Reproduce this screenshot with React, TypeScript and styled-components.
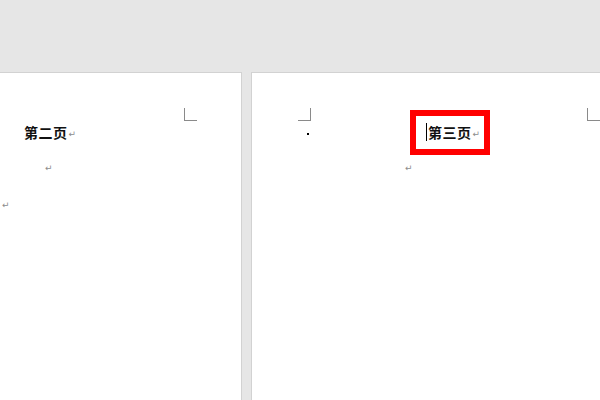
import React from "react";
import styled, { createGlobalStyle } from "styled-components";

const GlobalStyle = createGlobalStyle`
  html, body {
    margin: 0;
    padding: 0;
    background: #e6e6e6;
    overflow: hidden;
  }
`;

const Workspace = styled.div`
  width: 600px;
  height: 400px;
  padding-top: 72px;
  box-sizing: border-box;
  display: flex;
  gap: 9px;
  background: #e6e6e6;
  font-family: "Noto Sans CJK SC", "Noto Sans", sans-serif;
`;

const Page = styled.div<{ $width?: number }>`
  position: relative;
  flex: ${(p) => (p.$width ? `0 0 ${p.$width}px` : "1")};
  height: 328px;
  background: #ffffff;
  border-top: 1px solid #d2d2d2;
  border-left: ${(p) => (p.$width ? "none" : "1px solid #d2d2d2")};
  border-right: ${(p) => (p.$width ? "1px solid #d2d2d2" : "none")};
  box-sizing: border-box;
  padding-top: 40px;
`;

/* margin corner marks drawn on the page canvas */
const CornerMark = styled.div<{ $x: number; $flip?: boolean }>`
  position: absolute;
  top: 35px;
  left: ${(p) => p.$x}px;
  width: 12px;
  height: 12px;
  border-bottom: 1px solid #8a8a8a;
  ${(p) =>
    p.$flip ? "border-right: 1px solid #8a8a8a;" : "border-left: 1px solid #8a8a8a;"}
`;

const Line = styled.div<{ $indent: number; $height: number }>`
  display: flex;
  align-items: center;
  height: ${(p) => p.$height}px;
  padding-left: ${(p) => p.$indent}px;
`;

const Heading = styled.span`
  font-size: 14px;
  font-weight: 700;
  color: #111;
  letter-spacing: 0.5px;
  line-height: 18px;
`;

const Mark = styled.span`
  font-family: "DejaVu Sans", sans-serif;
  font-size: 9px;
  color: #8c8c8c;
  line-height: 10px;
  margin-left: 1px;
  margin-top: 3px;
`;

const Dot = styled.span`
  width: 2px;
  height: 2px;
  background: #000;
  margin-top: 4px;
`;

const Highlight = styled.div`
  display: flex;
  align-items: center;
  box-sizing: border-box;
  width: 80px;
  height: 45px;
  margin-left: 101px;
  border: 6px solid #ff0000;
  padding-left: 10px;
`;

const Caret = styled.span`
  width: 1px;
  height: 18px;
  background: #000;
  margin-right: 1px;
`;

export default function App() {
  return (
    <>
      <GlobalStyle />
      <Workspace>
        <Page $width={242}>
          <CornerMark $x={184} />
          <Line $indent={24} $height={38}>
            <Heading>第二页</Heading>
            <Mark>↵</Mark>
          </Line>
          <Line $indent={44} $height={30}>
            <Mark>↵</Mark>
          </Line>
          <Line $indent={1} $height={44}>
            <Mark>↵</Mark>
          </Line>
        </Page>
        <Page>
          <CornerMark $x={46} $flip />
          <CornerMark $x={335} />
          <Line $indent={55} $height={38}>
            <Dot />
            <Highlight>
              <Caret />
              <Heading>第三页</Heading>
              <Mark>↵</Mark>
            </Highlight>
          </Line>
          <Line $indent={152} $height={30}>
            <Mark>↵</Mark>
          </Line>
        </Page>
      </Workspace>
    </>
  );
}
